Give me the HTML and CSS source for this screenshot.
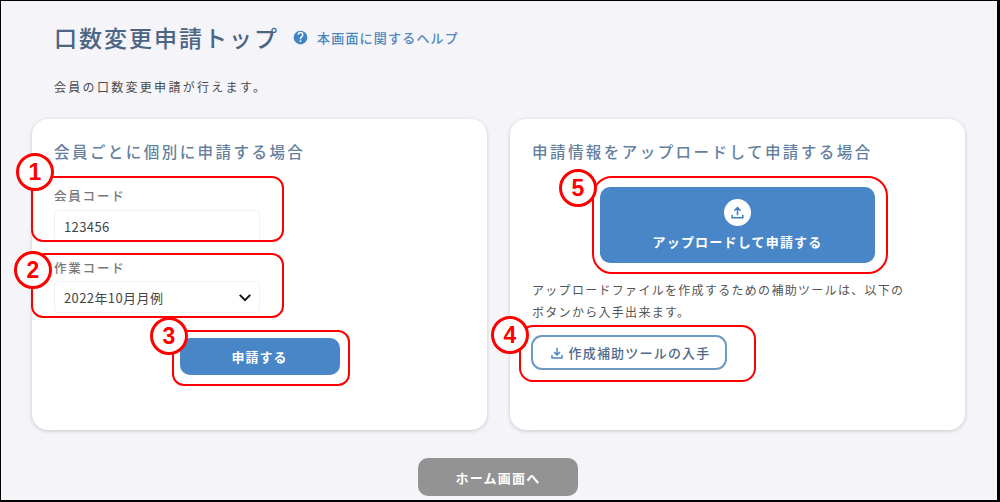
FILE: index.html
```html
<!doctype html>
<html lang="ja">
<head>
<meta charset="utf-8">
<title>口数変更申請トップ</title>
<link rel="stylesheet" href="styles.css">
</head>
<body>
<div class="frame">
  <header class="head">
    <h1>口数変更申請トップ</h1>
    <a class="help" href="#">
      <svg class="help-icon" viewBox="0 0 24 24" width="15" height="15"><path fill="#3f83c4" d="M12 1a11 11 0 1 0 0 22 11 11 0 0 0 0-22zm1.2 18h-2.6v-2.6h2.6V19zm2.6-8.6-1.1 1.1c-.9.9-1.5 1.7-1.5 3.3h-2.5v-.6c0-1.4.6-2.6 1.5-3.5l1.5-1.6c.5-.4.7-1 .7-1.7a2.4 2.4 0 0 0-4.8 0H7.2a4.8 4.8 0 0 1 9.6 0c0 1.1-.4 2.1-1 3z"/></svg>
      本画面に関するヘルプ
    </a>
  </header>
  <p class="lead">会員の口数変更申請が行えます。</p>

  <div class="cards">
    <section class="card">
      <h2>会員ごとに個別に申請する場合</h2>
      <div class="field">
        <label class="label">会員コード</label>
        <div class="input">123456</div>
      </div>
      <div class="field field-select">
        <label class="label">作業コード</label>
        <div class="input select">
          <span>2022年10月月例</span>
          <svg viewBox="0 0 16 10" width="14" height="9"><path d="M2 2l6 6 6-6" fill="none" stroke="#111" stroke-width="2.2"/></svg>
        </div>
      </div>
      <div class="submit-row">
        <button class="btn btn-submit">申請する</button>
      </div>
    </section>

    <section class="card">
      <h2>申請情報をアップロードして申請する場合</h2>
      <div class="upload-row">
        <button class="btn btn-upload">
          <span class="upload-icon">
            <svg viewBox="0 0 24 24" width="17" height="17"><path fill="none" stroke="#3f7fbf" stroke-width="2.2" d="M12 16V5M7.5 9.5 12 5l4.5 4.5M4.5 15v4.5h15V15"/></svg>
          </span>
          アップロードして申請する
        </button>
      </div>
      <p class="note">アップロードファイルを作成するための補助ツールは、以下の<br>ボタンから入手出来ます。</p>
      <button class="btn-tool">
        <svg viewBox="0 0 24 24" width="16" height="16"><path fill="none" stroke="#4a86bd" stroke-width="2.2" d="M12 4v11M7.5 10.5 12 15l4.5-4.5M4.5 15v4.5h15V15"/></svg>
        作成補助ツールの入手
      </button>
    </section>
  </div>

  <div class="foot">
    <button class="btn btn-home">ホーム画面へ</button>
  </div>

  <!-- red callouts drawn over the screen -->
  <div class="mark mark-1"></div>
  <div class="mark mark-2"></div>
  <div class="mark mark-3"></div>
  <div class="mark mark-4"></div>
  <div class="mark mark-5"></div>
  <div class="num num-1">1</div>
  <div class="num num-2">2</div>
  <div class="num num-3">3</div>
  <div class="num num-4">4</div>
  <div class="num num-5">5</div>
</div>
</body>
</html>
```
FILE: styles.css
```css
* {
  box-sizing: border-box;
}

html, body {
  margin: 0;
  padding: 0;
}

body {
  font-family: "Noto Sans CJK JP", "Noto Sans", sans-serif;
  color: #4a4a4a;
}

.frame {
  position: relative;
  width: 1000px;
  height: 502px;
  overflow: hidden;
  background: #f4f4f9;
  border-style: solid;
  border-color: #000;
  border-width: 1px 3px 2px 1px;
  padding: 0 31px 0 31px;
}

.head {
  display: flex;
  align-items: center;
  height: 34px;
  margin: 19px 0 0 22px;
}

h1 {
  margin: 0;
  font-size: 23px;
  font-weight: 500;
  letter-spacing: 2px;
  color: #4b6584;
}

.help {
  display: flex;
  align-items: center;
  margin-left: 14px;
  font-size: 13px;
  font-weight: 500;
  letter-spacing: 1.2px;
  color: #4f86bd;
  text-decoration: none;
}

.help-icon {
  margin-right: 9px;
}

.lead {
  margin: 23px 0 0 22px;
  height: 20px;
  font-size: 12px;
  line-height: 20px;
  letter-spacing: 2.3px;
}

.cards {
  display: flex;
  gap: 23px;
  margin-top: 22px;
}

.card {
  width: 455px;
  height: 311px;
  padding: 20px 22px 0;
  background: #fff;
  border-radius: 16px;
  box-shadow: 0 1px 4px rgba(0, 0, 0, .18);
}

h2 {
  margin: 0;
  height: 24px;
  font-size: 15.5px;
  line-height: 24px;
  font-weight: 500;
  letter-spacing: 2.45px;
  color: #657f9e;
}

.field {
  margin-top: 25px;
}

.field-select {
  margin-top: 18px;
}

.label {
  display: block;
  height: 16px;
  font-size: 12.5px;
  line-height: 16px;
  font-weight: 500;
  letter-spacing: 1.8px;
  color: #777;
}

.input {
  display: flex;
  align-items: center;
  justify-content: space-between;
  width: 206px;
  height: 32px;
  margin-top: 6px;
  padding: 0 9px;
  font-size: 13px;
  letter-spacing: .4px;
  color: #444;
  background: #fff;
  border: 1px solid #f2f2f4;
  border-radius: 4px;
}

.select {
  margin-top: 5px;
  padding-right: 7px;
}

.btn {
  display: block;
  border: none;
  font-family: inherit;
  font-weight: 700;
  color: #fff;
  background: #4886c8;
  letter-spacing: 1px;
}

.submit-row {
  display: flex;
  justify-content: center;
  margin-top: 25px;
}

.btn-submit {
  width: 160px;
  height: 37px;
  font-size: 13px;
  border-radius: 10px;
}

.upload-row {
  display: flex;
  justify-content: center;
  margin-top: 24px;
}

.btn-upload {
  display: flex;
  flex-direction: column;
  align-items: center;
  width: 275px;
  height: 76px;
  padding-top: 12px;
  font-size: 13px;
  letter-spacing: 1.2px;
  border-radius: 10px;
}

.upload-icon {
  display: flex;
  align-items: center;
  justify-content: center;
  width: 27px;
  height: 27px;
  margin-bottom: 6px;
  background: #fff;
  border-radius: 50%;
}

.note {
  margin: 16px 0 0;
  font-size: 12px;
  line-height: 22px;
  letter-spacing: 1.3px;
  color: #555;
}

.btn-tool {
  display: flex;
  align-items: center;
  justify-content: center;
  gap: 3px;
  width: 196px;
  height: 35px;
  margin: 12px 0 0 -1px;
  padding: 0 0 0 2px;
  font-family: inherit;
  font-size: 13px;
  font-weight: 500;
  letter-spacing: 1.2px;
  color: #50688a;
  background: #fff;
  border: 2px solid #6c9ac2;
  border-radius: 11px;
}

.foot {
  display: flex;
  justify-content: center;
  margin-top: 28px;
  padding-right: 2px;
}

.btn-home {
  width: 160px;
  height: 38px;
  font-size: 13px;
  letter-spacing: 1.2px;
  background: #939393;
  border-radius: 10px;
}

.mark {
  position: absolute;
  border: 2px solid #f00;
  border-radius: 12px;
}

.mark-1 { left: 30px; top: 175px; width: 253px; height: 66px; }
.mark-2 { left: 30px; top: 252px; width: 253px; height: 65px; }
.mark-3 { left: 171px; top: 329px; width: 178px; height: 56px; }
.mark-4 { left: 518px; top: 324px; width: 237px; height: 57px; border-radius: 14px; }
.mark-5 { left: 591px; top: 175px; width: 296px; height: 98px; border-radius: 20px; }

.num {
  position: absolute;
  display: flex;
  align-items: center;
  justify-content: center;
  width: 38px;
  height: 38px;
  font-family: "Liberation Sans", Arial, sans-serif;
  font-size: 23px;
  font-weight: 700;
  color: #f00;
  background: #fff;
  border: 3px solid #f00;
  border-radius: 50%;
}

.num-1 { left: 15px; top: 152px; }
.num-2 { left: 13px; top: 250px; }
.num-3 { left: 149px; top: 316px; }
.num-4 { left: 490px; top: 315px; }
.num-5 { left: 558px; top: 168px; }
```
